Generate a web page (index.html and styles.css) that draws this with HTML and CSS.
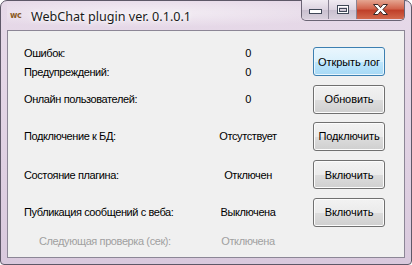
FILE: index.html
```html
<!DOCTYPE html>
<html lang="ru">
<head>
    <meta charset="UTF-8">
    <title>WebChat plugin ver. 0.1.0.1</title>
    <link rel="stylesheet" href="styles.css">
</head>
<body>

<div id="window">
    <div id="titlebar">
        <span class="app-icon">wc</span>
        <span class="title-text">WebChat plugin ver. 0.1.0.1</span>
        <div class="caption-buttons">
            <div class="cap-btn cap-min">
                <svg width="15" height="8" viewBox="0 0 15 8"><rect x="1.5" y="3.5" width="12" height="4" fill="#fff" stroke="#404858"/></svg>
            </div>
            <div class="cap-btn cap-max">
                <svg width="14" height="11" viewBox="0 0 14 11"><rect x="1.5" y="1.5" width="11" height="8" fill="none" stroke="#404858" stroke-width="1"/><rect x="2.5" y="2.5" width="9" height="6" fill="none" stroke="#fff" stroke-width="1"/><rect x="3.5" y="4.5" width="7" height="3" fill="none" stroke="#404858"/></svg>
            </div>
            <div class="cap-btn cap-close">
                <svg width="17" height="13" viewBox="0 0 17 13"><path d="M1.5 1.5h4.5l2.5 3.2 2.5-3.2h4.5l-4.6 5 4.6 5h-4.5l-2.5-3.2-2.5 3.2H1.5l4.6-5z" fill="#fff" stroke="#3a2a2a" stroke-width="1"/></svg>
            </div>
        </div>
    </div>

    <div id="client">
        <div class="form-grid">
            <div class="label r1">Ошибок:</div>
            <div class="value r1">0</div>
            <button class="win-button focused btn-log">Открыть лог</button>

            <div class="label r2">Предупреждений:</div>
            <div class="value r2">0</div>

            <div class="label">Онлайн пользователей:</div>
            <div class="value">0</div>
            <button class="win-button">Обновить</button>

            <div class="label">Подключение к БД:</div>
            <div class="value">Отсутствует</div>
            <button class="win-button">Подключить</button>

            <div class="label">Состояние плагина:</div>
            <div class="value">Отключен</div>
            <button class="win-button">Включить</button>

            <div class="label">Публикация сообщений с веба:</div>
            <div class="value">Выключена</div>
            <button class="win-button">Включить</button>

            <div class="label disabled indent">Следующая проверка (сек):</div>
            <div class="value disabled">Отключена</div>
        </div>
    </div>
</div>

</body>
</html>
```

FILE: styles.css
```css
body {
    margin: 0;
    background-color: #ffffff;
    font-family: 'Liberation Sans', Arial, sans-serif;
}
#window {
    width: 412px;
    height: 265px;
    box-sizing: border-box;
    border: 1px solid #5e5868;
    border-radius: 7px 7px 4px 4px;
    background: linear-gradient(to bottom, #e6d9e8 0%, #e4d6e6 30%, #d9c9dd 100%);
    padding: 0 6px 6px 6px;
    display: flex;
    flex-direction: column;
}
#titlebar {
    height: 29px;
    display: flex;
    align-items: flex-start;
    background: radial-gradient(ellipse at 35% 40%, rgba(255,255,255,0.55), rgba(255,255,255,0) 60%);
}
.app-icon {
    margin: 10px 0 0 3px;
    width: 16px;
    font-family: 'DejaVu Sans', sans-serif;
    font-weight: bold;
    font-size: 8px;
    letter-spacing: -0.3px;
    color: #8a5a1e;
}
.title-text {
    margin: 7px 0 0 5px;
    font-family: 'Noto Sans', sans-serif;
    font-size: 12.6px;
    color: #1a1a1a;
    text-shadow: 0 0 6px #ffffff, 0 0 3px #ffffff;
    flex: 1;
}
.caption-buttons {
    display: flex;
    margin-top: -1px;
    height: 20px;
    border: 1px solid #6a6474;
    border-top: none;
    border-radius: 0 0 5px 5px;
    overflow: hidden;
}
.cap-btn {
    display: flex;
    align-items: center;
    justify-content: center;
    height: 19px;
}
.cap-min, .cap-max {
    width: 26px;
    background: linear-gradient(to bottom, #f0ebf2 0%, #dcd3e0 50%, #c9bfcf 51%, #d8d0dc 100%);
    border-right: 1px solid #8a8494;
}
.cap-max {
    width: 27px;
}
.cap-close {
    width: 47px;
    background: linear-gradient(to bottom, #e5a591 0%, #d2654e 45%, #c0402a 55%, #d2684c 100%);
}
#client {
    flex: 1;
    border: 1px solid #8c8696;
    background-color: #f0f0f0;
}
.form-grid {
    display: grid;
    grid-template-columns: 174px 100px 87px;
    grid-template-rows: 18px 20px 34px 40px 37px 38px 20px;
    padding: 13px 0 0 16px;
    align-items: center;
    font-size: 11px;
    letter-spacing: -0.4px;
    color: #000000;
}
.value {
    text-align: center;
}
.disabled {
    color: #a0a0a0;
}
.indent {
    padding-left: 15px;
}
.win-button {
    justify-self: end;
    width: 72px;
    height: 29px;
    padding: 0;
    font-family: 'Liberation Sans', Arial, sans-serif;
    font-size: 11px;
    letter-spacing: -0.1px;
    color: #000000;
    border: 1px solid #707070;
    border-radius: 3px;
    box-shadow: inset 0 0 0 1px #fcfcfc;
    background: linear-gradient(to bottom, #f2f2f2 0%, #ebebeb 50%, #dddddd 51%, #cfcfcf 100%);
}
.btn-log {
    grid-column: 3;
    grid-row: 1 / span 2;
    align-self: start;
    margin-top: 3px;
}
.win-button.focused {
    border-color: #3c7fb1;
    box-shadow: inset 0 0 0 1px #e8f6fd;
    background: linear-gradient(to bottom, #eaf6fd 0%, #d9f0fc 50%, #bee6fd 51%, #a7d9f5 100%);
}
```
